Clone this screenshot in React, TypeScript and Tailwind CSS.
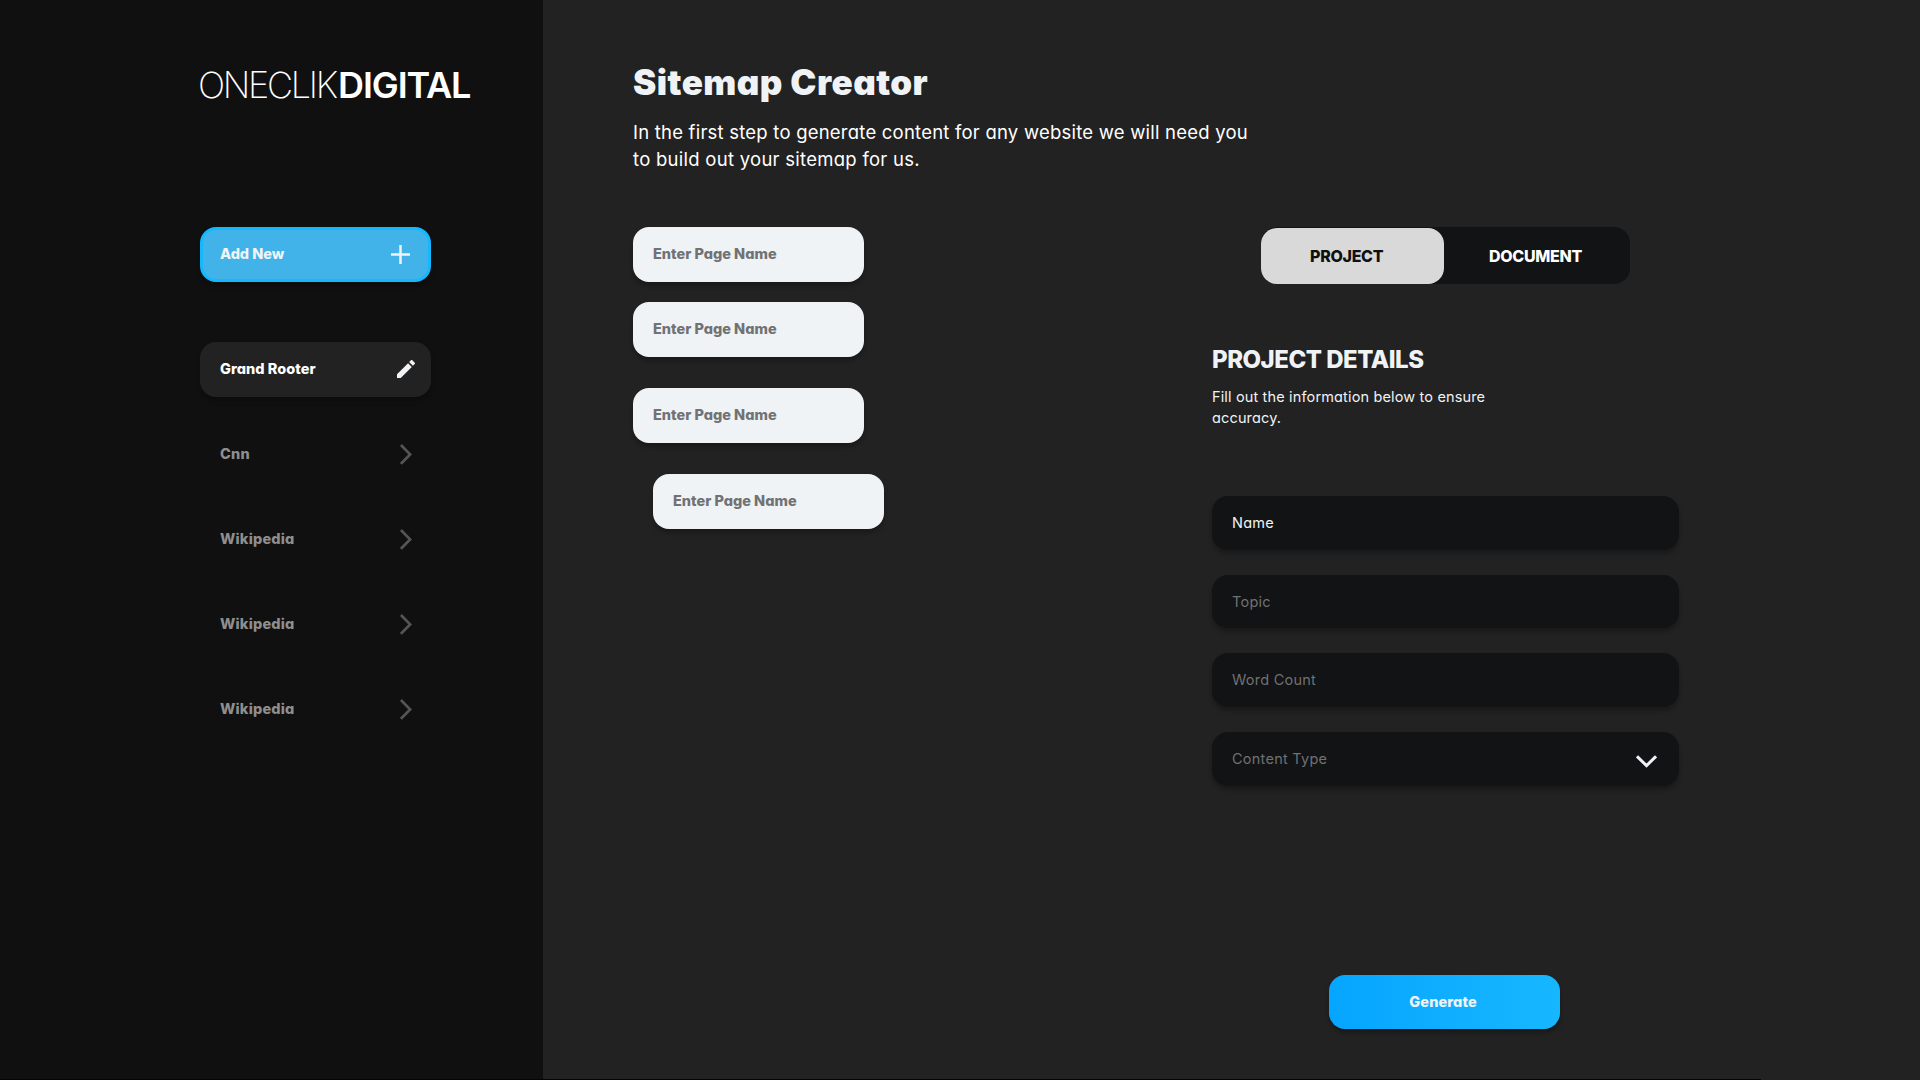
function PlusIcon() {
  return (
    <svg width="19" height="19" viewBox="0 0 19 19" className="mr-[18.5px]" fill="#eff3f6">
      <path d="M8.25 0h2.5v8.25H19v2.5h-8.25V19h-2.5v-8.25H0v-2.5h8.25z" />
    </svg>
  );
}

function PencilIcon() {
  return (
    <svg width="18" height="18" viewBox="3 3 18 18" className="mr-4" fill="#eff3f6">
      <path d="M3 17.25V21h3.75L17.81 9.94l-3.75-3.75L3 17.25zM20.71 7.04a1 1 0 0 0 0-1.41l-2.34-2.34a1 1 0 0 0-1.41 0l-1.83 1.83 3.75 3.75 1.83-1.83z" />
    </svg>
  );
}

function ChevronRight() {
  return (
    <svg width="12" height="21" viewBox="0 0 12 21" className="mr-[19px]" fill="none" stroke="#555" strokeWidth="2.7">
      <path d="M.9 1l9.2 9.4L.9 19.8" />
    </svg>
  );
}

function ChevronDown() {
  return (
    <svg width="21" height="13" viewBox="0 0 21 13" className="mr-[22px] mt-[5px]" fill="none" stroke="#eff3f6" strokeWidth="3">
      <path d="M1 1.3l9.5 9.3L20 1.3" />
    </svg>
  );
}

const projects = [
  { name: 'Cnn', tracking: 'tracking-[0.3px]' },
  { name: 'Wikipedia', tracking: 'tracking-[0.2px]' },
  { name: 'Wikipedia', tracking: 'tracking-[0.2px]' },
  { name: 'Wikipedia', tracking: 'tracking-[0.2px]' },
];

const pages = ['mt-[56px]', 'mt-[20.5px]', 'mt-[31.5px]', 'mt-[31.5px] ml-5'];

const fields = [
  { label: 'Name', color: 'text-[#eff3f6]', select: false },
  { label: 'Topic', color: 'text-[#707172]', select: false },
  { label: 'Word Count', color: 'text-[#707172]', select: false },
  { label: 'Content Type', color: 'text-[#707172]', select: true },
];

function Sidebar() {
  return (
    <aside className="w-[543px] shrink-0 bg-[#101010] pl-[200px]">
      <div className="mt-[63px] flex h-11 items-center whitespace-nowrap text-[36px] leading-none text-white">
        <span className="-ml-[2px] w-[140px] font-extralight tracking-[-2.3px]">ONECLIK</span>
        <span className="font-semibold tracking-[-1.1px]">DIGITAL</span>
      </div>
      <button className="mt-[120px] flex h-[54.5px] w-[231px] items-center justify-between rounded-2xl border-[3px] border-[#14b8ff] bg-[#41b3e8] pl-[17px] text-[14.5px] font-extrabold tracking-[-0.05px] text-[#eff3f6] shadow-[0_4px_4px_rgba(0,0,0,0.25)]">
        Add New
        <PlusIcon />
      </button>
      <div className="mt-[60.5px] flex h-[54.5px] w-[231px] items-center justify-between rounded-2xl bg-[#222] pl-5 text-[14.5px] font-extrabold tracking-[0.05px] text-white shadow-[0_4px_4px_rgba(0,0,0,0.25)]">
        Grand Rooter
        <PencilIcon />
      </div>
      <ul className="mt-[30.5px] flex w-[231px] flex-col gap-[30.5px]">
        {projects.map((p, i) => (
          <li key={i} className="flex h-[54.5px] items-center justify-between pl-5 text-[14.5px] font-extrabold text-[#8e8e8e]">
            <span className={p.tracking}>{p.name}</span>
            <ChevronRight />
          </li>
        ))}
      </ul>
    </aside>
  );
}

function SitemapColumn() {
  return (
    <section className="w-[669px] shrink-0 pl-[90px] pt-[59px]">
      <h1 className="whitespace-nowrap text-[35px] font-black leading-[46px] tracking-[0.45px] text-[#eff3f6]">Sitemap Creator</h1>
      <p className="mt-[14px] whitespace-nowrap text-[18.5px] leading-[27px] tracking-[0.22px] text-white">
        In the first step to generate content for any website we will need you
        <br />
        <span className="tracking-[0.27px]">to build out your sitemap for us.</span>
      </p>
      <div className="-mt-[2px]">
        {pages.map((cls, i) => (
          <div
            key={i}
            className={`${cls} flex h-[54.5px] w-[231px] items-center rounded-2xl bg-[#eff3f6] pl-5 text-[14.5px] font-extrabold tracking-[0px] text-[#717274] shadow-[0_4px_4px_rgba(0,0,0,0.25)]`}
          >
            Enter Page Name
          </div>
        ))}
      </div>
    </section>
  );
}

function DetailsColumn() {
  return (
    <section className="w-[467px] shrink-0 pt-[227px]">
      <div className="ml-[49px] flex h-[57px] w-[369px] items-end rounded-2xl bg-[#121315] text-base font-extrabold">
        <div className="flex h-14 w-[183px] items-center rounded-2xl bg-[#d9d9d9] pl-[49px] tracking-[-0.3px] text-[#101010]">PROJECT</div>
        <div className="flex h-14 items-center pl-[45px] tracking-[-0.3px] text-white">DOCUMENT</div>
      </div>
      <h2 className="mt-[58px] whitespace-nowrap text-2xl font-extrabold leading-9 tracking-[-0.5px] text-[#eff3f6]">PROJECT DETAILS</h2>
      <p className="mt-[8px] whitespace-nowrap text-[14.5px] leading-[21px] tracking-[0.15px] text-[#eff3f6]">
        Fill out the information below to ensure
        <br />
        accuracy.
      </p>
      <div className="mt-[68px] flex flex-col gap-[25px]">
        {fields.map((f) => (
          <div
            key={f.label}
            className={`${f.color} flex h-[53.7px] items-center justify-between rounded-2xl bg-[#121315] pl-5 text-[14.5px] tracking-[0.25px] shadow-[0_4px_4px_rgba(0,0,0,0.25)]`}
          >
            {f.label}
            {f.select && <ChevronDown />}
          </div>
        ))}
      </div>
      <button className="ml-[117px] mt-[189px] flex h-[54.5px] w-[231px] items-center justify-center rounded-2xl bg-linear-to-r from-[#06a5ff] to-[#17b7ff] pr-[3px] text-[14.5px] font-extrabold tracking-[0.1px] text-[#eff3f6] shadow-[0_4px_4px_rgba(0,0,0,0.25)]">
        Generate
      </button>
    </section>
  );
}

export default function App() {
  return (
    <div className="flex h-[1080px] w-[1920px] flex-col overflow-hidden bg-[#222] font-['Inter',sans-serif] [font-feature-settings:'cv11']">
      <div className="flex h-[1079px] shrink-0">
        <Sidebar />
        <SitemapColumn />
        <DetailsColumn />
      </div>
      <div className="h-px w-[1761px] bg-[#050305]" />
    </div>
  );
}
